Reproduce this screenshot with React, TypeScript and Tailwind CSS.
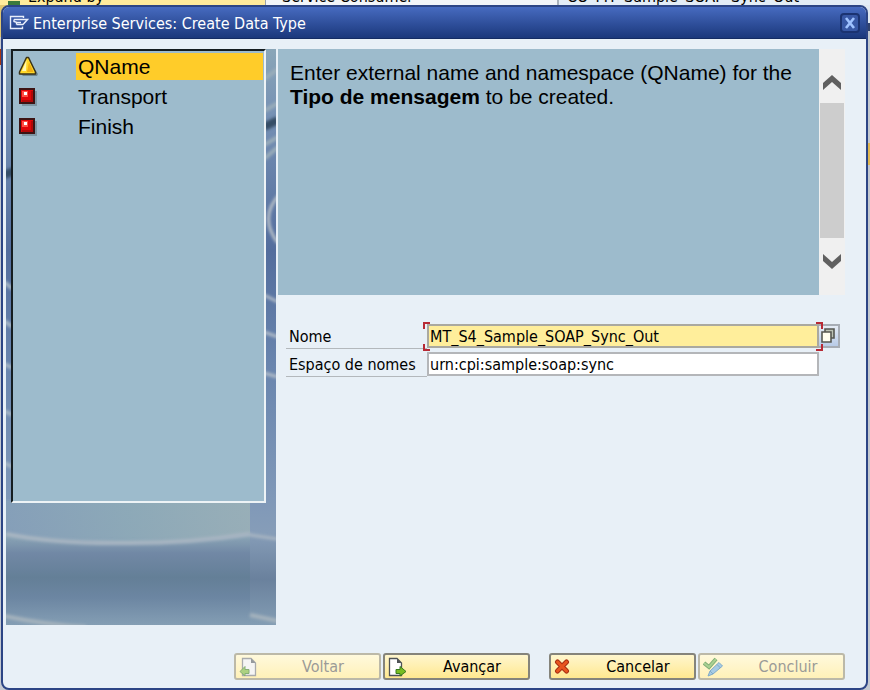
import React from "react";

const sans = "font-['DejaVu_Sans_Condensed','DejaVu_Sans',sans-serif]";
const arial = "font-['Liberation_Sans',Arial,sans-serif]";

function Backdrop() {
  return (
    <div aria-hidden="true" className={`absolute inset-0 overflow-hidden bg-[#d5dbe2] text-base leading-4 text-black ${sans}`}>
      <div className="flex h-[5px]">
        <div className="flex w-[265px] items-end gap-2 bg-[#ffeb9c] pl-2">
          <span className="h-1 w-3 bg-[#3c7a3c]" />
          <span>Expand by</span>
        </div>
        <div className="flex flex-1 items-end border-l border-[#9aa3ad] bg-[#f2f5f8] pl-4">Service Consumer</div>
        <div className="flex w-[313px] items-end border-l-2 border-[#a9b2bb] bg-[#e3edf6] pl-2">CO_MT_Sample_SOAP_Sync_Out</div>
      </div>
      <div className="flex justify-between">
        <div className="w-2">
          <div className="h-8 bg-[#e0c672]" />
          <div className="h-3 bg-[#c9ccd0]" />
          <div className="h-4 bg-[#a83410]" />
          <div className="h-[630px] bg-[#c3c8d0]" />
        </div>
        <div className="w-2">
          <div className="h-[18px] bg-[#dfe8f0]" />
          <div className="h-2 bg-[#31436f]" />
          <div className="h-28 bg-[#c3c8cf]" />
          <div className="h-[22px] bg-[#e0b850]" />
          <div className="h-[530px] bg-[#c3c8cf]" />
        </div>
      </div>
    </div>
  );
}

function WindowIcon() {
  return (
    <svg width="20" height="16" viewBox="0 0 20 16" fill="none" stroke="#e8eefb" strokeWidth="1.4" aria-hidden="true">
      <path d="M14.500 3V1.500H1.500V13.500H13.500V11.500" />
      <path d="M5 4.500H18.500L14 9.500H7.500M5 4.500V6.500L8 7.500H12M7.500 7.500V9.500" />
    </svg>
  );
}

function Waves() {
  return (
    <svg className="absolute inset-0 h-full w-full" viewBox="0 0 270 576" preserveAspectRatio="none" aria-hidden="true">
      <defs>
        <linearGradient id="water" x1="0" y1="0" x2="0" y2="1">
          <stop offset="0" stopColor="#8aa6b8" />
          <stop offset="0.12" stopColor="#7590b4" />
          <stop offset="0.35" stopColor="#536d9d" />
          <stop offset="0.55" stopColor="#6985ae" />
          <stop offset="0.78" stopColor="#7f98b8" />
          <stop offset="0.84" stopColor="#869db8" />
          <stop offset="0.92" stopColor="#6a819d" />
          <stop offset="1" stopColor="#839db4" />
        </linearGradient>
        <linearGradient id="pool" x1="0" y1="0" x2="0" y2="1">
          <stop offset="0" stopColor="#8caab8" />
          <stop offset="0.28" stopColor="#8ba5b6" />
          <stop offset="0.42" stopColor="#7188a5" />
          <stop offset="0.62" stopColor="#647f97" />
          <stop offset="0.78" stopColor="#6c86a2" />
          <stop offset="1" stopColor="#849eb4" />
        </linearGradient>
        <linearGradient id="shine" x1="0" y1="0" x2="1" y2="0">
          <stop offset="0" stopColor="#849db9" />
          <stop offset="0.5" stopColor="#8da9b8" />
          <stop offset="1" stopColor="#9bb0b8" />
        </linearGradient>
        <filter id="soft" x="-10%" y="-20%" width="120%" height="140%">
          <feGaussianBlur stdDeviation="1.6" />
        </filter>
      </defs>
      <rect width="270" height="576" fill="url(#water)" />
      <rect y="452" width="244" height="124" fill="url(#pool)" />
      <path d="M0 450H244V484Q180 495 110 494Q40 490 0 484Z" fill="url(#shine)" opacity="0.8" />
      <g filter="url(#soft)" fill="none">
        <path d="M0 485Q45 494 110 494Q180 495 244 485" stroke="#a9b6c3" strokeWidth="4" />
        <path d="M244 486L272 490" stroke="#a9b6c3" strokeWidth="3" />
        <path d="M-2 567Q40 576 80 578M244 566L272 572" stroke="#a5b3bd" strokeWidth="4" />
        <path d="M258 30L272 20M258 62L272 54M258 96L272 88M258 110L272 98" stroke="#9aadba" strokeWidth="4" />
        <path d="M258 78L272 71M-2 126L8 122" stroke="#344d66" strokeWidth="8" />
        <path d="M274 145Q252 168 272 194" stroke="#bac2c9" strokeWidth="3" />
        <path d="M258 246L272 253M258 283L272 288M258 324L272 328" stroke="#b2bdc9" strokeWidth="3" />
        <path d="M-2 233L7 240M-2 272L7 278M-2 315L7 319M-2 362L7 366M-2 414L7 418" stroke="#a6b6c5" strokeWidth="4" />
      </g>
    </svg>
  );
}

function Warning() {
  return (
    <svg width="22" height="22" viewBox="0 0 22 22" aria-hidden="true">
      <path d="M10 3L20 18L19 20H5L3 18Z" fill="#6e8794" />
      <path d="M8.500 1.500H10.500L17.500 16V18H1.500V16Z" fill="#ffd829" stroke="#3a3217" strokeWidth="1.500" strokeLinejoin="round" />
      <path d="M8.500 4L4 15H8Z" fill="#fff7b0" />
      <path d="M11 6L15.500 16H9Z" fill="#efae12" />
    </svg>
  );
}

function Stop() {
  return (
    <svg width="22" height="22" viewBox="0 0 22 22" aria-hidden="true">
      <rect x="4" y="5" width="15" height="15" fill="#7b95a3" />
      <rect x="2" y="3" width="14" height="14" fill="#e00508" stroke="#3c1414" strokeWidth="2" />
      <rect x="4" y="5" width="6" height="6" fill="#ff4d43" />
      <rect x="6" y="6" width="3" height="3" fill="#fff" />
      <path d="M13 5H15V16H4V14H13Z" fill="#b00808" />
    </svg>
  );
}

function Page({ forward = false }: { forward?: boolean }) {
  return (
    <svg width="20" height="20" viewBox="0 0 20 20" aria-hidden="true">
      {forward ? (
        <>
          <path d="M1.500 1.500H9L13.500 6V18.500H1.500Z" fill="#fff" stroke="#4f5357" strokeWidth="1.300" />
          <path d="M9 1.500V6H13.500Z" fill="#4f5357" />
          <path d="M8 12.500H12V9.500L18 14.500L12 19V16.500H8Z" fill="#78bd21" stroke="#377a1d" />
        </>
      ) : (
        <>
          <path d="M3.500 1.500H12L16.500 6V18.500H3.500Z" fill="#f5f5f4" stroke="#a9abad" strokeWidth="1.300" />
          <path d="M12 1.500V6H16.500Z" fill="#969a9d" />
          <path d="M10 12.500H6V9.500L1 14.500L6 19V16.500H10Z" fill="#acd181" stroke="#86af75" />
        </>
      )}
    </svg>
  );
}

function Cross() {
  return (
    <svg width="20" height="20" viewBox="0 0 20 20" aria-hidden="true">
      <path d="M3.500 5L12.500 14M12.500 5L3.500 14" stroke="#a92f13" strokeWidth="5" strokeLinecap="round" />
      <path d="M3.500 5L12.500 14M12.500 5L3.500 14" stroke="#e8561f" strokeWidth="3" strokeLinecap="round" />
    </svg>
  );
}

function CheckPen() {
  return (
    <svg width="22" height="20" viewBox="0 0 22 20" aria-hidden="true">
      <path d="M1 6L6 10L13 2" fill="none" stroke="#7fae75" strokeWidth="4" />
      <path d="M1 6L6 10L13 2" fill="none" stroke="#a9d092" strokeWidth="2" />
      <path d="M5 19L7 14L16 5.500L19.500 9L10 17Z" fill="#a6cbe5" stroke="#80abc8" />
      <path d="M7 14L10 17M14 7.500L17.500 11" stroke="#80abc8" />
    </svg>
  );
}

function Chevron({ down = false }: { down?: boolean }) {
  return (
    <svg width="20" height="16" viewBox="0 0 20 16" aria-hidden="true">
      <path d={down ? "M1 0L10 8L19 0V7L10 15L1 7Z" : "M1 15L10 7L19 15V8L10 0L1 8Z"} fill="#606060" />
    </svg>
  );
}

function WizardButton({ icon, label, disabled = false }: { icon: React.ReactNode; label: string; disabled?: boolean }) {
  return (
    <button
      disabled={disabled}
      className={`flex h-[27px] w-[147px] items-center rounded-[3px] border-2 pl-[3px] text-base leading-5 ${
        disabled
          ? "border-[#bcb9a8] bg-linear-to-b from-[#fff9dc] to-[#fff1b8] text-[#9b9b97]"
          : "border-[#85847b] bg-linear-to-b from-[#fff6cd] to-[#ffe88f] text-black"
      }`}
    >
      {icon}
      <span className="flex-1 pl-2 text-center">{label}</span>
    </button>
  );
}

const steps = [
  { label: "QName", active: true },
  { label: "Transport", active: false },
  { label: "Finish", active: false },
];

export default function App() {
  return (
    <div className="relative h-screen overflow-hidden pt-[5px] pr-[2px] pl-[1px]">
      <Backdrop />
      <section className={`relative flex h-full flex-col overflow-hidden rounded-lg border-2 border-[#2c4585] bg-[#e8f0f7] text-black ${sans}`}>
        <header className="flex h-8 shrink-0 items-center gap-1 border-b border-[#142c64] bg-linear-to-b from-[#476bc0] to-[#1b387c] px-[6px] text-white">
          <WindowIcon />
          <h1 className="flex-1 pt-[2px] text-base leading-5">Enterprise Services: Create Data Type</h1>
          <button aria-label="Close" className="flex h-5 w-5 items-center justify-center rounded-sm border-2 border-[#1b3371] bg-[#3858a5]">
            <svg width="12" height="12" viewBox="0 0 12 12" aria-hidden="true">
              <path d="M2 1L10 11M10 1L2 11" stroke="#9fc2ff" strokeWidth="2.600" />
            </svg>
          </button>
        </header>

        <main className="flex flex-1 px-[3px] pt-[10px]">
          <aside className="relative h-[576px] w-[270px] shrink-0 overflow-hidden">
            <Waves />
            <nav className="relative ml-[5px] h-[454px] w-[255px] border-2 border-t-[#151d20] border-r-[#edf3f6] border-b-[#edf3f6] border-l-[#151d20] bg-[#9dbbcc] pt-[2px]">
              <ol className={`text-[21px] leading-[27px] ${arial}`}>
                {steps.map((s) => (
                  <li key={s.label} className="flex h-[30px] items-start pr-[1px] pl-[5px]">
                    <span className="w-[58px] pt-[3px]">{s.active ? <Warning /> : <Stop />}</span>
                    <span className={`flex-1 pl-[2px] ${s.active ? "bg-[#ffcc29]" : ""}`}>{s.label}</span>
                  </li>
                ))}
              </ol>
            </nav>
          </aside>

          <div className="min-w-0 flex-1 pr-[18px] pl-[2px]">
            <div className="flex h-[246px]">
              <p className={`flex-1 bg-[#9dbbcc] pt-3 pl-3 text-[21px] leading-6 ${arial}`}>
                Enter external name and namespace (QName) for the
                <br />
                <b>Tipo de mensagem</b> to be created.
              </p>
              <div className="flex w-[26px] flex-col items-center bg-[#f0f0f0] pt-[26px]">
                <Chevron />
                <div className="mt-3 mb-4 h-[135px] w-6 bg-[#cdcdcd]" />
                <Chevron down />
              </div>
            </div>

            <form className="mt-[27px] pl-2 text-base leading-5" onSubmit={(e) => e.preventDefault()}>
              <div className="flex h-7 items-center">
                <label htmlFor="name" className="flex h-[26px] w-[141px] items-center border-b border-[#b3b8bc] pt-[2px] pl-[3px]">Nome</label>
                <div className="relative flex-1">
                  <input id="name" defaultValue="MT_S4_Sample_SOAP_Sync_Out" className="block h-6 w-full border-2 border-[#aaa9a0] bg-[#ffee9b] pl-[1px] outline-none" />
                  <span className="absolute -top-[2px] -left-1 h-[7px] w-[7px] border-t-2 border-l-2 border-[#b72a35]" />
                  <span className="absolute -bottom-[3px] -left-1 h-[7px] w-[7px] border-b-2 border-l-2 border-[#b72a35]" />
                  <span className="absolute -top-[2px] -right-1 z-10 h-[7px] w-[7px] border-t-2 border-r-2 border-[#b72a35]" />
                  <span className="absolute -right-1 -bottom-[3px] z-10 h-[7px] w-[7px] border-r-2 border-b-2 border-[#b72a35]" />
                </div>
                <button type="button" aria-label="Value help" className="mr-[5px] flex h-6 w-[21px] items-center border-2 border-l-0 border-[#a7adb5] bg-linear-to-b from-[#e5ecf5] to-[#b8cbe7] pl-[1px]">
                  <svg width="17" height="18" viewBox="0 0 17 18" fill="#fffef0" stroke="#555750" strokeWidth="1.600" aria-hidden="true">
                    <path d="M5 2H14V11H5Z" fill="#bcc2b4" />
                    <path d="M2 5H11V15H2Z" />
                  </svg>
                </button>
              </div>
              <div className="flex h-7 items-center">
                <label htmlFor="namespace" className="flex h-[26px] w-[141px] items-center border-b border-[#b3b8bc] pt-[2px] pl-[3px]">Espaço de nomes</label>
                <input id="namespace" defaultValue="urn:cpi:sample:soap:sync" className="mr-[26px] block h-6 min-w-0 flex-1 border-2 border-[#b4b6b9] bg-white pl-[1px] outline-none" />
              </div>
            </form>
          </div>
        </main>

        <footer className="flex justify-end gap-[19px] pr-[21px] pb-2">
          <div className="flex gap-[2px]">
            <WizardButton icon={<Page />} label="Voltar" disabled />
            <WizardButton icon={<Page forward />} label="Avançar" />
          </div>
          <div className="flex gap-[2px]">
            <WizardButton icon={<Cross />} label="Cancelar" />
            <WizardButton icon={<CheckPen />} label="Concluir" disabled />
          </div>
        </footer>
      </section>
    </div>
  );
}
